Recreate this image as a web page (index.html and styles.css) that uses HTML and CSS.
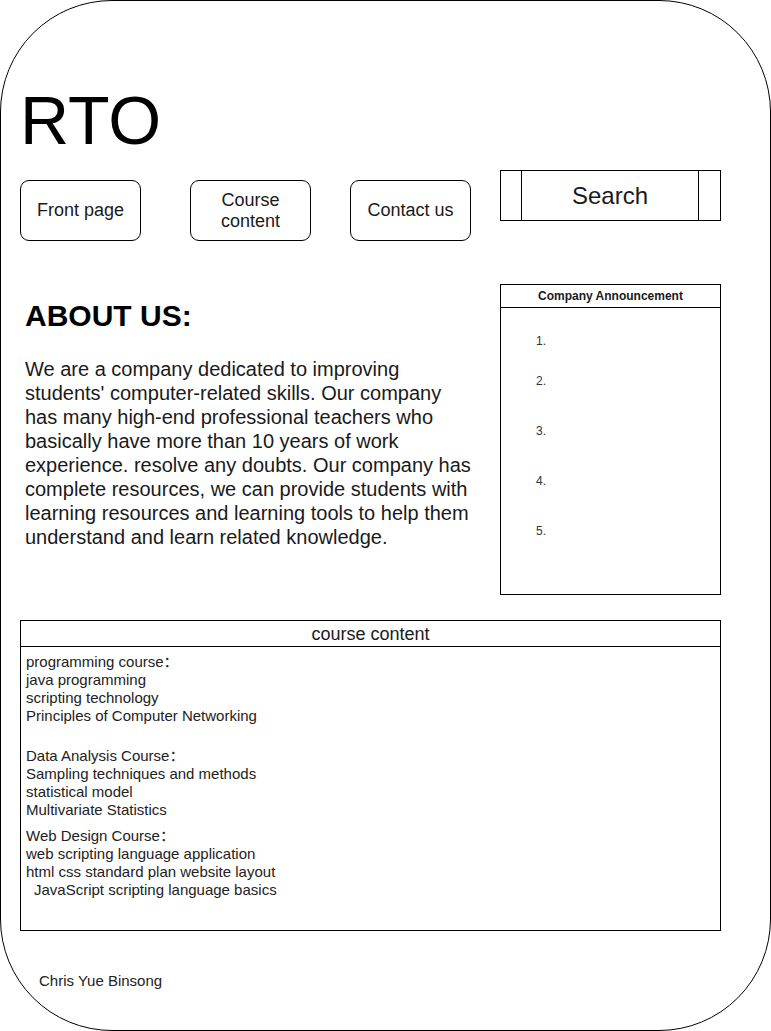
FILE: index.html
```html
<!DOCTYPE html>
<html lang="en">
<head>
<meta charset="utf-8">
<title>RTO</title>
<link rel="stylesheet" href="styles.css">
</head>
<body>
<div class="frame">
  <h1 class="logo">RTO</h1>

  <nav class="nav">
    <a class="nav-btn">Front page</a>
    <a class="nav-btn nav-btn--second">Course<br>content</a>
    <a class="nav-btn nav-btn--third">Contact us</a>
    <div class="search">
      <span class="search-side"></span>
      <span class="search-label">Search</span>
      <span class="search-side"></span>
    </div>
  </nav>

  <section class="main">
    <div class="about">
      <h2 class="about-title">ABOUT US:</h2>
      <p class="about-text">We are a company dedicated to improving students' computer-related skills. Our company has many high-end professional teachers who basically have more than 10 years of work experience. resolve any doubts. Our company has complete resources, we can provide students with learning resources and learning tools to help them understand and learn related knowledge.</p>
    </div>
    <aside class="announce">
      <div class="announce-head">Company Announcement</div>
      <ol class="announce-list">
        <li class="announce-item"></li>
        <li class="announce-item announce-item--near"></li>
        <li class="announce-item"></li>
        <li class="announce-item"></li>
        <li class="announce-item"></li>
      </ol>
    </aside>
  </section>

  <section class="courses">
    <div class="courses-head">course content</div>
    <div class="courses-body">
      <div class="course-group">
        <div>programming course：</div>
        <div>java programming</div>
        <div>scripting technology</div>
        <div>Principles of Computer Networking</div>
      </div>
      <div class="course-group course-group--wide">
        <div>Data Analysis Course：</div>
        <div>Sampling techniques and methods</div>
        <div>statistical model</div>
        <div>Multivariate Statistics</div>
      </div>
      <div class="course-group course-group--tight">
        <div>Web Design Course：</div>
        <div>web scripting language application</div>
        <div>html css standard plan website layout</div>
        <div class="indent">JavaScript scripting language basics</div>
      </div>
    </div>
  </section>

  <footer class="footer">Chris Yue Binsong</footer>
</div>
</body>
</html>
```

FILE: styles.css
```css
* {
  box-sizing: border-box;
}

html, body {
  margin: 0;
  padding: 0;
  background: #ffffff;
}

body {
  font-family: "Liberation Sans", Arial, "Noto Sans CJK SC", sans-serif;
  color: #000;
}

.frame {
  width: 771px;
  height: 1031px;
  border: 1px solid #000;
  border-radius: 112px;
  padding: 79px 0 0 19px;
  overflow: hidden;
}

.logo {
  margin: 0;
  font-size: 68px;
  line-height: 80px;
  font-weight: normal;
  height: 80px;
}

.nav {
  display: flex;
  align-items: flex-start;
  margin-top: 10px;
}

.nav-btn {
  width: 121px;
  height: 61px;
  margin-top: 10px;
  border: 1px solid #000;
  border-radius: 9px;
  display: flex;
  align-items: center;
  justify-content: center;
  text-align: center;
  font-size: 18px;
  line-height: 21px;
  color: #1a1a1a;
}

.nav-btn--second {
  margin-left: 49px;
}

.nav-btn--third {
  margin-left: 39px;
}

.search {
  margin-left: 29px;
  width: 221px;
  height: 51px;
  border: 1px solid #000;
  display: grid;
  grid-template-columns: 21px 1fr 22px;
}

.search-side {
  display: block;
}

.search-side:first-child {
  border-right: 1px solid #000;
}

.search-side:last-child {
  border-left: 1px solid #000;
}

.search-label {
  display: flex;
  align-items: center;
  justify-content: center;
  font-size: 24px;
  color: #1a1a1a;
}

.main {
  display: flex;
  align-items: flex-start;
  margin-top: 43px;
}

.about {
  width: 455px;
  margin-left: 5px;
  padding-top: 14px;
}

.about-title {
  margin: 0;
  font-size: 30px;
  line-height: 36px;
  font-weight: bold;
}

.about-text {
  width: 448px;
  margin: 23px 0 0 0;
  font-size: 20px;
  line-height: 24px;
  color: #1a1a1a;
}

.announce {
  margin-left: 20px;
  width: 221px;
  height: 311px;
  border: 1px solid #000;
}

.announce-head {
  height: 23px;
  border-bottom: 1px solid #000;
  font-size: 12px;
  font-weight: bold;
  line-height: 22px;
  text-align: center;
  color: #1a1a1a;
}

.announce-list {
  margin: 0;
  padding: 26px 0 0 35px;
  list-style: decimal inside;
  font-size: 12px;
  line-height: 14px;
  color: #333;
}

.announce-item {
  height: 14px;
  margin-top: 36px;
}

.announce-item:first-child {
  margin-top: 0;
}

.announce-item--near {
  margin-top: 26px;
}

.courses {
  margin-top: 25px;
  width: 701px;
  height: 311px;
  border: 1px solid #000;
}

.courses-head {
  height: 26px;
  border-bottom: 1px solid #000;
  font-size: 18px;
  line-height: 27px;
  text-align: center;
  color: #1a1a1a;
}

.courses-body {
  padding: 6px 0 0 5px;
  font-size: 15px;
  line-height: 18px;
  color: #222;
}

.course-group--wide {
  margin-top: 22px;
}

.course-group--tight {
  margin-top: 8px;
}

.indent {
  padding-left: 8px;
}

.footer {
  margin: 41px 0 0 19px;
  font-size: 15px;
  line-height: 18px;
  color: #222;
}
```
